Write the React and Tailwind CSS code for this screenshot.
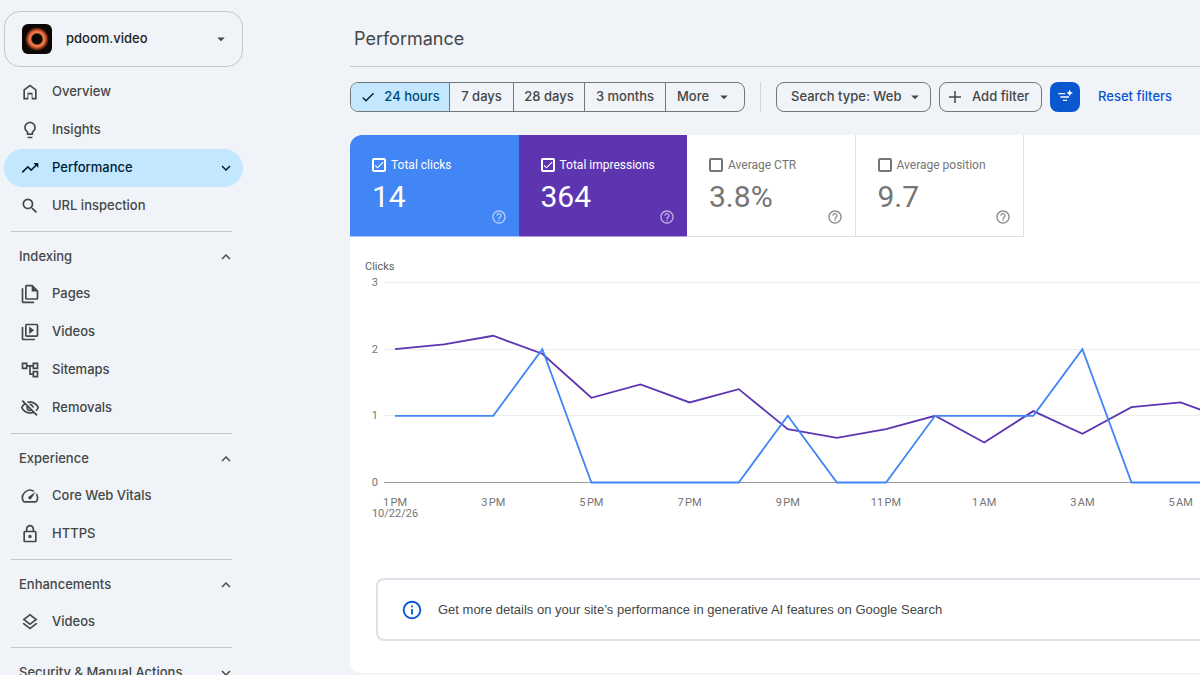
import React from "react";

const icons = {
    home: "M6 19h3v-6h6v6h3v-9l-6-4.500L6 10v9zm-2 2V9l8-6 8 6v12h-6v-6h-4v6H4z",
    bulb: "M9 21c0 .55.45 1 1 1h4c.55 0 1-.45 1-1v-1H9v1zm3-19C8.140 2 5 5.140 5 9c0 2.380 1.190 4.470 3 5.740V17c0 .55.45 1 1 1h6c.55 0 1-.45 1-1v-2.260c1.810-1.270 3-3.360 3-5.740 0-3.860-3.140-7-7-7zm2.850 11.100l-.85.6V16h-4v-2.300l-.85-.6A4.997 4.997 0 0 1 7 9c0-2.760 2.240-5 5-5s5 2.240 5 5c0 1.630-.8 3.160-2.150 4.100z",
    trend: "M16 6l2.290 2.290-4.880 4.880-4-4L2 16.590 3.410 18l6-6 4 4 6.300-6.290L22 12V6z",
    search: "M15.500 14h-.79l-.28-.27A6.471 6.471 0 0 0 16 9.500 6.500 6.500 0 1 0 9.500 16c1.610 0 3.090-.59 4.230-1.570l.27.28v.79l5 4.990L20.490 19l-4.990-5zm-6 0C7.010 14 5 11.990 5 9.500S7.010 5 9.500 5 14 7.010 14 9.500 11.990 14 9.500 14z",
    pages: "M15 1H8c-1.100 0-2 .9-2 2v14c0 1.100.9 2 2 2h12c1.100 0 2-.9 2-2V8l-7-7zm5 16H8V3h6v6h6v8zM4 5H2v16c0 1.100.9 2 2 2h13v-2H4V5z",
    videos: "M4 6H2v14c0 1.100.9 2 2 2h14v-2H4V6zm16-4H8c-1.100 0-2 .9-2 2v12c0 1.100.9 2 2 2h12c1.100 0 2-.9 2-2V4c0-1.100-.9-2-2-2zm0 14H8V4h12v12zM11 5.500v9l6-4.500z",
    sitemap: "M22 11V3h-7v3H9V3H2v8h7V8h2v10h4v3h7v-8h-7v3h-2V8h2v3h7zM7 9H4V5h3v4zm10 6h3v4h-3v-4zm0-10h3v4h-3V5z",
    hidden: "M12 6c3.790 0 7.170 2.130 8.820 5.500-.59 1.220-1.420 2.270-2.410 3.120l1.410 1.410c1.390-1.230 2.490-2.770 3.180-4.530C21.270 7.110 17 4 12 4c-1.270 0-2.490.2-3.640.57l1.650 1.650C10.660 6.090 11.320 6 12 6zm-1.070 1.140L13 9.210c.57.25 1.030.71 1.280 1.280l2.070 2.070c.08-.34.14-.7.14-1.070C16.500 9.010 14.480 7 12 7c-.37 0-.72.05-1.070.14zM2.010 3.870l2.680 2.680A11.738 11.738 0 0 0 1 11.500C2.730 15.890 7 19 12 19c1.520 0 2.980-.29 4.320-.82l3.420 3.420 1.410-1.410L3.420 2.450 2.010 3.870zm7.500 7.500l2.610 2.610c-.04.01-.08.02-.12.02-1.380 0-2.500-1.120-2.500-2.500 0-.05.01-.08.01-.13zm-3.400-3.400l1.750 1.750a4.600 4.600 0 0 0-.36 1.780 4.507 4.507 0 0 0 6.270 4.140l.98.98c-.88.24-1.800.38-2.750.38-3.790 0-7.170-2.130-8.820-5.500.7-1.430 1.720-2.610 2.930-3.530z",
    speed: "M20.380 8.570l-1.230 1.850a8 8 0 0 1-.22 7.580H5.070A8 8 0 0 1 15.580 6.850l1.850-1.230A10 10 0 0 0 3.350 19a2 2 0 0 0 1.720 1h13.850a2 2 0 0 0 1.740-1 10 10 0 0 0-.27-10.440zm-9.790 6.840a2 2 0 0 0 2.830 0l5.660-8.490-8.490 5.660a2 2 0 0 0 0 2.830z",
    lock: "M18 8h-1V6c0-2.760-2.240-5-5-5S7 3.240 7 6v2H6c-1.100 0-2 .9-2 2v10c0 1.100.9 2 2 2h12c1.100 0 2-.9 2-2V10c0-1.100-.9-2-2-2zM9 6c0-1.660 1.340-3 3-3s3 1.340 3 3v2H9V6zm9 14H6V10h12v10zm-6-3c1.100 0 2-.9 2-2s-.9-2-2-2-2 .9-2 2 .9 2 2 2z",
    layers: "M11.990 18.540l-7.370-5.730L3 14.070l9 7 9-7-1.630-1.270zM12 16l7.360-5.730L21 9l-9-7-9 7 1.630 1.270L12 16zm0-11.470L17.740 9 12 13.470 6.260 9 12 4.530z",
    up: "M12 8l-6 6 1.410 1.410L12 10.830l4.590 4.580L18 14z",
    down: "M16.590 8.590L12 13.170 7.410 8.590 6 10l6 6 6-6z",
    caret: "M7 10l5 5 5-5z",
    check: "M9 16.170L4.830 12l-1.420 1.410L9 19 21 7l-1.410-1.410z",
    plus: "M20 13h-7v7h-2v-7H4v-2h7V4h2v7h7v2z",
    help: "M11 18h2v-2h-2v2zm1-16C6.480 2 2 6.480 2 12s4.480 10 10 10 10-4.480 10-10S17.520 2 12 2zm0 18c-4.410 0-8-3.590-8-8s3.590-8 8-8 8 3.590 8 8-3.590 8-8 8zm0-14c-2.210 0-4 1.790-4 4h2c0-1.100.9-2 2-2s2 .9 2 2c0 2-3 1.750-3 5h2c0-2.250 3-2.500 3-5 0-2.210-1.790-4-4-4z",
    info: "M11 7h2v2h-2zm0 4h2v6h-2zm1-9C6.480 2 2 6.480 2 12s4.480 10 10 10 10-4.480 10-10S17.520 2 12 2zm0 18c-4.410 0-8-3.590-8-8s3.590-8 8-8 8 3.590 8 8-3.590 8-8 8z",
    smartFilter: "M2 6h10v2H2zm3 5h13v2H5zm4 5h6v2H9zM19 1l1.600 3.400L24 6l-3.400 1.600L19 11l-1.600-3.400L14 6l3.400-1.600z",
};

const Icon = ({ name, className }) => (
    <svg viewBox="0 0 24 24" fill="currentColor" aria-hidden="true" className={className}>
        <path d={icons[name]} />
    </svg>
);

const mainLinks = [
    { icon: "home", label: "Overview" },
    { icon: "bulb", label: "Insights" },
    { icon: "trend", label: "Performance", active: true },
    { icon: "search", label: "URL inspection" },
];

const sections = [
    {
        title: "Indexing",
        links: [
            { icon: "pages", label: "Pages" },
            { icon: "videos", label: "Videos" },
            { icon: "sitemap", label: "Sitemaps" },
            { icon: "hidden", label: "Removals" },
        ],
    },
    {
        title: "Experience",
        links: [
            { icon: "speed", label: "Core Web Vitals" },
            { icon: "lock", label: "HTTPS" },
        ],
    },
    {
        title: "Enhancements",
        links: [{ icon: "layers", label: "Videos" }],
    },
    { title: "Security & Manual Actions", links: [] },
];

const metrics = [
    { id: "clicks", label: "Total clicks", value: "14", checked: true, color: "bg-[#4285f4] border-[#a8c7fa] text-white", help: "text-white/60" },
    { id: "impressions", label: "Total impressions", value: "364", checked: true, color: "bg-[#5e35b1] border-[#b39ddb] text-white", help: "text-white/60" },
    { id: "ctr", label: "Average CTR", value: "3.8%", checked: false, color: "bg-white border-[#e0e0e0] border-r text-[#757575]", help: "text-[#8a8a8a]" },
    { id: "position", label: "Average position", value: "9.7", checked: false, color: "bg-white border-[#e0e0e0] border-r text-[#757575]", help: "text-[#8a8a8a]" },
];

const clicks = [1, 1, 1, 2, 0, 0, 0, 0, 1, 0, 0, 1, 1, 1, 2, 0, 0, 0];
const impressions = [2, 2.07, 2.2, 1.93, 1.27, 1.47, 1.2, 1.4, 0.8, 0.67, 0.8, 1, 0.6, 1.07, 0.73, 1.13, 1.2, 0.93];
const hours = ["1\u202fPM", "3\u202fPM", "5\u202fPM", "7\u202fPM", "9\u202fPM", "11\u202fPM", "1\u202fAM", "3\u202fAM", "5\u202fAM"];

const xAt = (i) => 45 + i * 49.1;
const yAt = (v) => 225.5 - v * 66.7;
const toPoints = (data) => data.map((v, i) => `${xAt(i)},${yAt(v)}`).join(" ");

const NavLink = ({ icon, label, active }) => (
    <a
        href="#"
        aria-current={active ? "page" : undefined}
        className={`flex h-[38px] items-center rounded-full pl-4 pr-2 ${active ? "bg-[#c2e7ff] text-[#001d35]" : "text-[#444746]"}`}
    >
        <Icon name={icon} className="size-5" />
        <span className="ml-3 flex-1">{label}</span>
        {active && <Icon name="down" className="size-[18px]" />}
    </a>
);

const Sidebar = () => (
    <aside className="w-[350px] shrink-0 overflow-hidden pl-1 pt-[11px] text-[13px] font-medium">
        <div className="w-[239px]">
            <button className="flex h-14 w-full items-center rounded-2xl border border-[#c4c7c9] pl-[17px] pr-3 text-[#1f1f1f]">
                <svg viewBox="0 0 30 30" aria-hidden="true" className="size-[30px]">
                    <defs>
                        <radialGradient id="glow">
                            <stop offset="0.4" stopColor="#0b0705" />
                            <stop offset="0.54" stopColor="#ee8050" />
                            <stop offset="0.68" stopColor="#e8683a" />
                            <stop offset="0.84" stopColor="#7a3018" />
                            <stop offset="1" stopColor="#0b0705" />
                        </radialGradient>
                    </defs>
                    <rect width="30" height="30" rx="6" fill="#0b0705" />
                    <circle cx="15" cy="15" r="12" fill="url(#glow)" />
                </svg>
                <span className="ml-[14px] flex-1 text-left">pdoom.video</span>
                <Icon name="caret" className="size-[18px] text-[#444746]" />
            </button>

            <nav className="pb-[6px] pt-[6px]">
                {mainLinks.map((link) => (
                    <NavLink key={link.label} {...link} />
                ))}
            </nav>

            {sections.map((section) => (
                <nav key={section.title} aria-label={section.title} className="pb-[6px]">
                    <div className="ml-[7px] mr-[11px] border-t border-[#c4c7c9]" />
                    <button className="mt-[7px] flex h-9 w-full items-center justify-between pl-[15px] pr-2 text-[#444746]">
                        <span>{section.title}</span>
                        <Icon name={section.links.length ? "up" : "down"} className="size-[18px]" />
                    </button>
                    {section.links.map((link) => (
                        <NavLink key={link.label} {...link} />
                    ))}
                </nav>
            ))}
        </div>
    </aside>
);

const FilterBar = () => (
    <div className="flex h-[30px] items-center text-[13px] font-medium text-[#444746]">
        <div className="flex h-full divide-x divide-[#747775] overflow-hidden rounded-lg border border-[#747775]">
            <button className="flex w-[99px] items-center justify-center gap-2 bg-[#c2e7ff] text-[#004a77]">
                <Icon name="check" className="size-4 text-[#001d35]" />
                24 hours
            </button>
            <button className="w-16">7 days</button>
            <button className="w-[71px]">28 days</button>
            <button className="w-[81px]">3 months</button>
            <button className="flex w-[78px] items-center justify-center gap-[6px]">
                More
                <Icon name="caret" className="size-[18px]" />
            </button>
        </div>
        <div className="mx-[15px] h-full w-px bg-[#d3d7dc]" />
        <button className="flex h-full w-[155px] items-center justify-between rounded-lg border border-[#747775] pl-[14px] pr-[6px]">
            Search type: Web
            <Icon name="caret" className="size-[18px]" />
        </button>
        <button className="ml-2 flex h-full w-[103px] items-center gap-2 rounded-lg border border-[#747775] pl-[6px]">
            <Icon name="plus" className="size-[18px]" />
            Add filter
        </button>
        <button aria-label="Smart filter" className="ml-2 flex size-[30px] items-center justify-center rounded-lg bg-[#0b57d0] text-white">
            <Icon name="smartFilter" className="size-4" />
        </button>
        <button className="ml-[18px] whitespace-nowrap text-[#0b57d0]">Reset filters</button>
    </div>
);

const MetricCard = ({ id, label, value, checked, color, help }) => (
    <div className={`flex h-[102px] flex-col border-b pl-[22px] pr-3 pt-[21px] ${color}`}>
        <label htmlFor={id} className="flex h-[18px] items-center gap-[5px] text-xs">
            <span className="relative size-[14px]">
                <input
                    id={id}
                    type="checkbox"
                    defaultChecked={checked}
                    className="peer block size-[14px] appearance-none rounded-[2px] border-2 border-current"
                />
                <Icon name="check" className="pointer-events-none absolute left-px top-px hidden size-3 peer-checked:block" />
            </span>
            {label}
        </label>
        <div className="mt-[5px] text-[30px] leading-9">{value}</div>
        <button aria-label={`About ${label}`} className={`-mt-[6px] self-end ${help}`}>
            <Icon name="help" className="block size-4" />
        </button>
    </div>
);

const Chart = () => (
    <svg role="img" aria-label="Clicks and impressions by hour" className="block h-[300px] w-full text-[11px]">
        <text x="15" y="13" fill="#616161">Clicks</text>
        {[3, 2, 1, 0].map((v) => (
            <g key={v}>
                <text x="28" y={Math.floor(yAt(v)) + 4} textAnchor="end" fill="#757575">{v}</text>
                <line x1="34" x2="100%" y1={Math.floor(yAt(v)) + 0.5} y2={Math.floor(yAt(v)) + 0.5} stroke={v ? "#eeeeee" : "#9e9e9e"} />
            </g>
        ))}
        <polyline points={toPoints(impressions)} fill="none" stroke="#5e35b1" strokeWidth="1.800" />
        <polyline points={toPoints(clicks)} fill="none" stroke="#4285f4" strokeWidth="1.800" />
        {hours.map((h, i) => (
            <text key={h} x={xAt(i * 2)} y="249" textAnchor="middle" fill="#757575">{h}</text>
        ))}
        <text x="45" y="260" textAnchor="middle" fill="#757575">10/22/26</text>
    </svg>
);

const App = () => {
    return (
        <div className="flex h-screen overflow-hidden bg-[#f0f3f8] font-['Inter',sans-serif]">
            <Sidebar />
            <main className="min-w-0 flex-1 overflow-hidden">
                <header className="mb-[15px] border-b border-[#c9cdd2] pb-[13px] pl-1 pt-[25px]">
                    <h1 className="text-lg leading-7 text-[#444746]">Performance</h1>
                </header>

                <FilterBar />

                <section className="mt-[23px] overflow-hidden rounded-l-xl bg-white pb-8 font-['Roboto',sans-serif]">
                    <div className="grid w-[674px] grid-cols-4">
                        {metrics.map((metric) => (
                            <MetricCard key={metric.id} {...metric} />
                        ))}
                    </div>

                    {/* Chart */}
                    <div className="pt-5">
                        <Chart />
                    </div>

                    {/* Banner */}
                    <div className="ml-[26px] mt-[21px] flex h-[63px] items-center rounded-l-lg border-2 border-r-0 border-[#dce2e9] pl-[23px] font-['Liberation_Sans',sans-serif] text-[13px] text-[#444746]">
                        <Icon name="info" className="size-[22px] text-[#0b57d0]" />
                        <p className="ml-[15px]">
                            Get more details on your site’s performance in generative AI features on Google Search
                        </p>
                    </div>
                </section>
            </main>
        </div>
    );
};

export default App;
